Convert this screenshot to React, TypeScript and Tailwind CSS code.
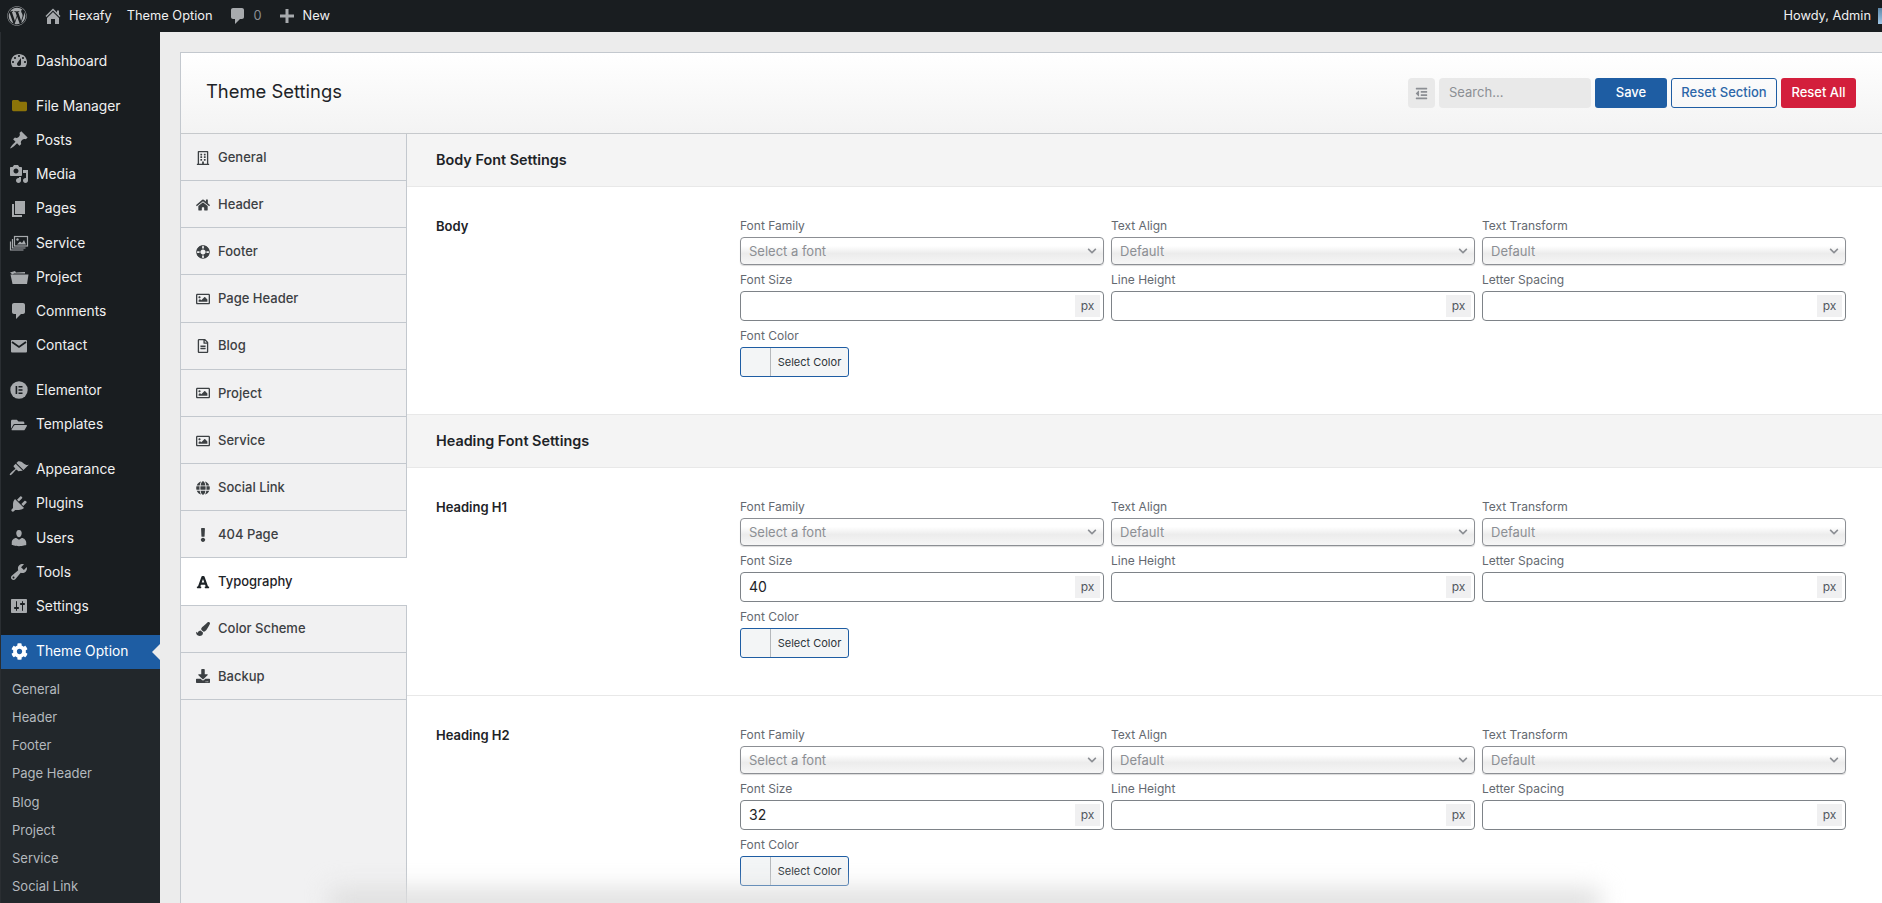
import type { ReactNode } from "react";
import {
  FaChevronDown,
  FaCog,
  FaDownload,
  FaExclamation,
  FaFolder,
  FaFolderOpen,
  FaFont,
  FaGlobe,
  FaHome,
  FaLifeRing,
  FaOutdent,
  FaPaintBrush,
  FaRegBuilding,
  FaRegFileAlt,
  FaRegImage,
  FaWordpress,
} from "react-icons/fa";

function Dash({ d, className = "" }: { d: string; className?: string }) {
  return (
    <svg viewBox="0 0 20 20" className={`size-5 fill-current ${className}`} aria-hidden>
      <path d={d} />
    </svg>
  );
}

const D = {
  dashboard:
    "M3.76 16h12.48c1.1-1.37 1.76-3.11 1.76-5 0-4.42-3.58-8-8-8s-8 3.58-8 8c0 1.89.66 3.63 1.76 5zM10 4c.55 0 1 .45 1 1s-.45 1-1 1-1-.45-1-1 .45-1 1-1zM6 6c.55 0 1 .45 1 1s-.45 1-1 1-1-.45-1-1 .45-1 1-1zm8 0c.55 0 1 .45 1 1s-.45 1-1 1-1-.45-1-1 .45-1 1-1zm-5.37 5.55L12 7v6c0 1.1-.9 2-2 2s-2-.9-2-2c0-.57.24-1.08.63-1.45zM4 10c.55 0 1 .45 1 1s-.45 1-1 1-1-.45-1-1 .45-1 1-1zm12 0c.55 0 1 .45 1 1s-.45 1-1 1-1-.45-1-1 .45-1 1-1z",
  pin: "M10.44 3.02l1.82-1.82 6.36 6.35-1.83 1.82c-1.05-.68-2.48-.57-3.41.36l-.75.75c-.92.93-1.04 2.35-.35 3.41l-1.83 1.82-2.41-2.41-2.8 2.79c-.42.42-3.38 2.71-3.8 2.29s1.86-3.39 2.28-3.81l2.79-2.79L4.1 9.36l1.83-1.82c1.05.69 2.48.57 3.4-.36l.75-.75c.93-.92 1.05-2.35.36-3.41z",
  media:
    "M13 11V4c0-.55-.45-1-1-1h-1.67L9 1H5L3.67 3H2c-.55 0-1 .45-1 1v7c0 .55.45 1 1 1h10c.55 0 1-.45 1-1zM7 4.5c1.38 0 2.5 1.12 2.5 2.5S8.38 9.5 7 9.5 4.5 8.38 4.5 7 5.62 4.5 7 4.5zM14 6h5v10.5c0 1.38-1.12 2.5-2.5 2.5S14 17.88 14 16.5s1.12-2.5 2.5-2.5c.17 0 .34.02.5.05V9h-3V6zm-4 8.05V13h2v3.5c0 1.38-1.12 2.5-2.5 2.5S7 17.88 7 16.5 8.12 14 9.5 14c.17 0 .34.02.5.05z",
  page: "M6 15V2h10v13H6zm-1 1h8v2H3V5h2v11z",
  comment: "M5 2h9c1.1 0 2 .9 2 2v7c0 1.1-.9 2-2 2h-2l-5 5v-5H5c-1.1 0-2-.9-2-2V4c0-1.1.9-2 2-2z",
  home: "M16 8.5l1.53 1.53-1.06 1.06L10 4.62l-6.47 6.47-1.06-1.06L10 2.5l4 4v-2h2v4zm-6-2.46l6 5.99V18h-4v-5H8v5H4v-5.97z",
  plus: "M17 8.5v3h-5.5V17h-3v-5.5H3v-3h5.5V3h3v5.5z",
  brush:
    "M14.48 11.06L7.41 3.99l1.5-1.5c.5-.56 2.3-.47 3.51.32 1.21.8 1.43 1.28 2.91 2.1 1.18.64 2.45 1.26 4.45.85zm-.71.71L6.7 4.7 4.93 6.47c-.39.39-.39 1.02 0 1.41l1.06 1.06c.39.39.39 1.03 0 1.42-.6.6-6.23 4.64-5.1 5.74 1.1 1.1 5.14-4.5 5.74-5.1.39-.39 1.03-.39 1.42 0l1.06 1.06c.39.39 1.02.39 1.41 0z",
  plug: "M13.11 4.36L9.87 7.6 8 5.73l3.24-3.24c.35-.34 1.05-.2 1.56.32.52.51.66 1.21.31 1.55zm-8 1.77l.91-1.12 9.01 9.01-1.19.84c-.71.71-2.63 1.16-3.82 1.16H6.14L4.9 17.26c-.59.59-1.54.59-2.12 0-.59-.58-.59-1.53 0-2.12l1.24-1.24v-3.88c0-1.13.4-3.19 1.09-3.89zm7.26 3.97l3.24-3.24c.34-.35 1.04-.21 1.55.31.52.51.66 1.21.31 1.55l-3.24 3.25z",
  users:
    "M10 9.25c-2.27 0-2.73-3.44-2.73-3.44C7 4.02 7.82 2 9.97 2c2.16 0 2.98 2.02 2.71 3.81 0 0-.41 3.44-2.68 3.44zm0 2.57L12.72 10c2.39 0 4.52 2.33 4.52 4.53v2.49s-3.65 1.13-7.24 1.13c-3.65 0-7.24-1.13-7.24-1.13v-2.49c0-2.25 1.94-4.48 4.47-4.48z",
  tools:
    "M16.68 9.77c-1.34 1.34-3.3 1.67-4.95.99l-5.41 6.52c-.99.99-2.59.99-3.58 0s-.99-2.59 0-3.57l6.52-5.42c-.68-1.65-.35-3.61.99-4.95 1.28-1.28 3.12-1.62 4.72-1.06l-2.89 2.89 2.82 2.82 2.86-2.87c.53 1.58.18 3.39-1.08 4.65zM3.81 16.21c.4.39 1.04.39 1.43 0 .4-.4.4-1.04 0-1.43-.39-.4-1.03-.4-1.43 0-.39.39-.39 1.03 0 1.43z",
  settings:
    "M18 16V4c0-.55-.45-1-1-1H3c-.55 0-1 .45-1 1v12c0 .55.45 1 1 1h14c.55 0 1-.45 1-1zM8 11h1c.55 0 1 .45 1 1s-.45 1-1 1H8v1.5c0 .28-.22.5-.5.5s-.5-.22-.5-.5V13H6c-.55 0-1-.45-1-1s.45-1 1-1h1V5.5c0-.28.22-.5.5-.5s.5.22.5.5V11zm5-2h-1c-.55 0-1-.45-1-1s.45-1 1-1h1V5.5c0-.28.22-.5.5-.5s.5.22.5.5V7h1c.55 0 1 .45 1 1s-.45 1-1 1h-1v5.5c0 .28-.22.5-.5.5s-.5-.22-.5-.5V9z",
};

function ServiceIcon() {
  return (
    <svg viewBox="0 0 20 20" className="size-5 fill-none stroke-current" aria-hidden>
      <rect x="5.5" y="3.5" width="13" height="9.5" strokeWidth="1.2" />
      <path d="M8 11.5l3-3 2 1.5 2-3 2 4.5z" className="fill-current stroke-none" />
      <circle cx="8.5" cy="6.5" r="1.2" className="fill-current stroke-none" />
      <path d="M3.5 6v9h13M1.5 8.5v8.5h13" strokeWidth="1.2" />
    </svg>
  );
}

function ProjectIcon() {
  return (
    <svg viewBox="0 0 20 20" className="size-5 fill-current" aria-hidden>
      <path d="M1 5.5l5-1.5 1 1.5 9-.5v1.5H5L3.5 7.5z" />
      <path d="M1.5 7.5h18l-1.5 9.5H3.5z" />
    </svg>
  );
}

function MailIcon() {
  return (
    <svg viewBox="0 0 20 20" className="size-5" aria-hidden>
      <rect x="2" y="4" width="16" height="12.5" rx="1" className="fill-current" />
      <path d="M3 6l7 5 7-5" className="fill-none stroke-[#191d20]" strokeWidth="1.8" />
    </svg>
  );
}

function ElementorIcon() {
  return (
    <svg viewBox="0 0 20 20" className="size-5" aria-hidden>
      <circle cx="10" cy="10" r="8.7" className="fill-current" />
      <path d="M6.6 6h1.6v8H6.6zM9.5 6h4v1.6h-4zM9.5 9.2h4v1.6h-4zM9.5 12.4h4V14h-4z" className="fill-[#191d20]" />
    </svg>
  );
}

type SideItem = { label: string; icon: ReactNode; gapBefore?: boolean };

const sideItems: SideItem[] = [
  { label: "Dashboard", icon: <Dash d={D.dashboard} /> },
  { label: "File Manager", icon: <FaFolder className="text-[15px] text-[#8c7409]" />, gapBefore: true },
  { label: "Posts", icon: <Dash d={D.pin} /> },
  { label: "Media", icon: <Dash d={D.media} /> },
  { label: "Pages", icon: <Dash d={D.page} /> },
  { label: "Service", icon: <ServiceIcon /> },
  { label: "Project", icon: <ProjectIcon /> },
  { label: "Comments", icon: <Dash d={D.comment} /> },
  { label: "Contact", icon: <MailIcon /> },
  { label: "Elementor", icon: <ElementorIcon />, gapBefore: true },
  { label: "Templates", icon: <FaFolderOpen className="text-[16px]" /> },
  { label: "Appearance", icon: <Dash d={D.brush} />, gapBefore: true },
  { label: "Plugins", icon: <Dash d={D.plug} /> },
  { label: "Users", icon: <Dash d={D.users} /> },
  { label: "Tools", icon: <Dash d={D.tools} /> },
  { label: "Settings", icon: <Dash d={D.settings} /> },
];

const subItems = ["General", "Header", "Footer", "Page Header", "Blog", "Project", "Service", "Social Link"];

const navItems: { label: string; icon: ReactNode; active?: boolean }[] = [
  { label: "General", icon: <FaRegBuilding /> },
  { label: "Header", icon: <FaHome /> },
  { label: "Footer", icon: <FaLifeRing className="rotate-45" /> },
  { label: "Page Header", icon: <FaRegImage /> },
  { label: "Blog", icon: <FaRegFileAlt /> },
  { label: "Project", icon: <FaRegImage /> },
  { label: "Service", icon: <FaRegImage /> },
  { label: "Social Link", icon: <FaGlobe /> },
  { label: "404 Page", icon: <FaExclamation /> },
  { label: "Typography", icon: <FaFont />, active: true },
  { label: "Color Scheme", icon: <FaPaintBrush /> },
  { label: "Backup", icon: <FaDownload /> },
];

function AdminBar() {
  return (
    <header className="flex h-8 shrink-0 items-center overflow-hidden bg-[#191d20] text-[12.8px] text-[#f0f0f1]">
      <FaWordpress className="ml-[7px] text-[20px] text-[#a7aaad]" />
      <Dash d={D.home} className="ml-[16px] text-[#a7aaad]" />
      <span className="ml-[6px]">Hexafy</span>
      <span className="ml-[15px]">Theme Option</span>
      <Dash d={D.comment} className="ml-[15px] text-[#a7aaad]" />
      <span className="ml-[6px] text-[#8c8f94]">0</span>
      <Dash d={D.plus} className="ml-[15px] text-[#a7aaad]" />
      <span className="ml-[6px]">New</span>
      <span className="ml-auto">Howdy, Admin</span>
      <span className="ml-[7px] -mr-[12px] h-4 w-4 shrink-0 bg-[linear-gradient(180deg,#5d87a8,#9fc6e6)]" />
    </header>
  );
}

function Sidebar() {
  return (
    <aside className="flex w-40 shrink-0 flex-col border-l border-[#2a2e32] bg-[#191d20] pt-3 text-[13.8px] text-[#f0f0f1]">
      {sideItems.map((item) => (
        <div
          key={item.label}
          className={`flex h-[34.25px] shrink-0 items-center ${item.gapBefore ? "mt-[10.5px]" : ""}`}
        >
          <span className="flex w-[35px] shrink-0 items-center justify-center pl-px text-[#a7aaad]">{item.icon}</span>
          <span>{item.label}</span>
        </div>
      ))}
      <div className="relative mt-[11px] flex h-[34px] shrink-0 items-center bg-[#1e5da3] text-white">
        <span className="flex w-[35px] shrink-0 items-center justify-center pl-px">
          <FaCog className="text-[17px]" />
        </span>
        <span>Theme Option</span>
        <span className="absolute top-[9px] right-0 border-y-8 border-r-8 border-y-transparent border-r-[#ececec]" />
      </div>
      <div className="flex-1 bg-[#22272b] pt-[7px] text-[13px] text-[#b4b9be]">
        {subItems.map((label) => (
          <div key={label} className="flex h-[28.2px] items-center pl-[11px]">
            {label}
          </div>
        ))}
      </div>
    </aside>
  );
}

function Select({ value }: { value: string }) {
  return (
    <div className="flex h-7 items-center justify-between rounded border border-[#8c8f94] bg-[linear-gradient(#fff_0%,#fff_30%,#ececec_60%,#f6f6f6_100%)] pr-[6px] pl-2 text-[13px] text-[#8c8f94] shadow-[0_1px_1px_rgba(0,0,0,0.15)]">
      <span className="pt-[2px]">{value}</span>
      <FaChevronDown className="text-[10px]" />
    </div>
  );
}

function PxInput({ value = "" }: { value?: string }) {
  return (
    <div className="flex h-[30px] items-center justify-between rounded border border-[#7e8388] bg-white pr-[3px] pl-2 text-sm text-[#1d2327]">
      <span>{value}</span>
      <span className="flex h-[22px] w-[25px] items-center justify-center bg-[#f0f0f1] text-xs text-[#50575e]">px</span>
    </div>
  );
}

function Field({ label, children }: { label: string; children: ReactNode }) {
  return (
    <div className="flex flex-col gap-[2px]">
      <span className="h-[18px] text-xs leading-[18px] text-[#646970]">{label}</span>
      {children}
    </div>
  );
}

function FontRow({ title, size, last }: { title: string; size?: string; last?: boolean }) {
  return (
    <section className={`flex pt-[30px] pb-[37px] pl-[29px] ${last ? "" : "border-b border-[#e8e8e8]"}`}>
      <h3 className="w-[304px] shrink-0 text-[13px] leading-[18px] font-semibold text-[#1d2327]">{title}</h3>
      <div className="mr-[36px] flex-1">
        <div className="grid grid-cols-3 gap-x-[7px] gap-y-[6px]">
          <Field label="Font Family">
            <Select value="Select a font" />
          </Field>
          <Field label="Text Align">
            <Select value="Default" />
          </Field>
          <Field label="Text Transform">
            <Select value="Default" />
          </Field>
          <Field label="Font Size">
            <PxInput value={size} />
          </Field>
          <Field label="Line Height">
            <PxInput />
          </Field>
          <Field label="Letter Spacing">
            <PxInput />
          </Field>
          <Field label="Font Color">
            <div className="flex h-[30px] w-[109px] items-stretch rounded-[3px] border border-[#1e5da3] bg-[#f3f5f6]">
              <span className="w-[30px] border-r border-[#b5b8bb]" />
              <span className="flex flex-1 items-center justify-center text-[11px] text-[#2c3338]">Select Color</span>
            </div>
          </Field>
        </div>
      </div>
    </section>
  );
}

function SectionHead({ title }: { title: string }) {
  return (
    <div className="flex h-[53px] items-center border-b border-[#e8e8e8] bg-[#f4f4f4] pl-[29px] text-[14.4px] font-semibold text-[#1d2327]">
      {title}
    </div>
  );
}

export default function App() {
  return (
    <div className="flex h-[903px] flex-col overflow-hidden font-['Inter',sans-serif] antialiased">
      <AdminBar />
      <div className="flex min-h-0 flex-1">
        <Sidebar />
        <main className="relative min-w-0 flex-1 overflow-hidden bg-[#ececec] pt-5 pl-5">
          <div className="flex h-full flex-col border-t border-l border-[#c3c8ce] bg-white">
            <div className="flex h-[81px] shrink-0 items-center justify-between border-b border-[#c6c9cc] bg-[linear-gradient(#fff,#f3f3f3)] pr-[26px] pl-[25px]">
              <h1 className="pb-[2px] text-[18.4px] text-[#1d2327]">Theme Settings</h1>
              <div className="flex h-[30px] gap-1 text-[13px] font-medium">
                <button className="flex w-[27px] items-center justify-center rounded-sm bg-[#e9e9e9] text-[13px] text-[#8c8f94]">
                  <FaOutdent />
                </button>
                <input
                  placeholder="Search..."
                  className="w-[152px] rounded-sm bg-[#e9e9e9] px-[10px] pb-[1px] text-[13px] font-normal outline-none placeholder:text-[#8c8f94]"
                />
                <button className="w-[72px] rounded-[3px] bg-[#1e5da3] text-white">Save</button>
                <button className="w-[106px] rounded-[3px] border border-[#1e5da3] text-[#2c66a8]">Reset Section</button>
                <button className="w-[75px] rounded-[3px] bg-[#d31f3c] text-white">Reset All</button>
              </div>
            </div>
            <div className="flex min-h-0 flex-1">
              <nav className="w-[226px] shrink-0 border-r border-[#c3c8ce] bg-[#f1f1f2] text-[13px] font-medium text-[#3c4043]">
                {navItems.map((item) => (
                  <div
                    key={item.label}
                    className={`relative flex h-[47.17px] items-center gap-[8px] border-b border-[#c3c8ce] pt-[1px] pl-[15px] ${
                      item.active ? "-mr-px bg-white text-[#1d2327]" : ""
                    }`}
                  >
                    <span className="flex w-[14px] shrink-0 justify-center text-[14px]">{item.icon}</span>
                    {item.label}
                  </div>
                ))}
              </nav>
              <div className="min-w-0 flex-1">
                <SectionHead title="Body Font Settings" />
                <FontRow title="Body" />
                <SectionHead title="Heading Font Settings" />
                <FontRow title="Heading H1" size="40" />
                <FontRow title="Heading H2" size="32" last />
              </div>
            </div>
          </div>
          <div className="pointer-events-none absolute right-[282px] -bottom-[14px] left-[170px] h-[28px] bg-[#dedede] blur-[12px]" />
        </main>
      </div>
    </div>
  );
}
